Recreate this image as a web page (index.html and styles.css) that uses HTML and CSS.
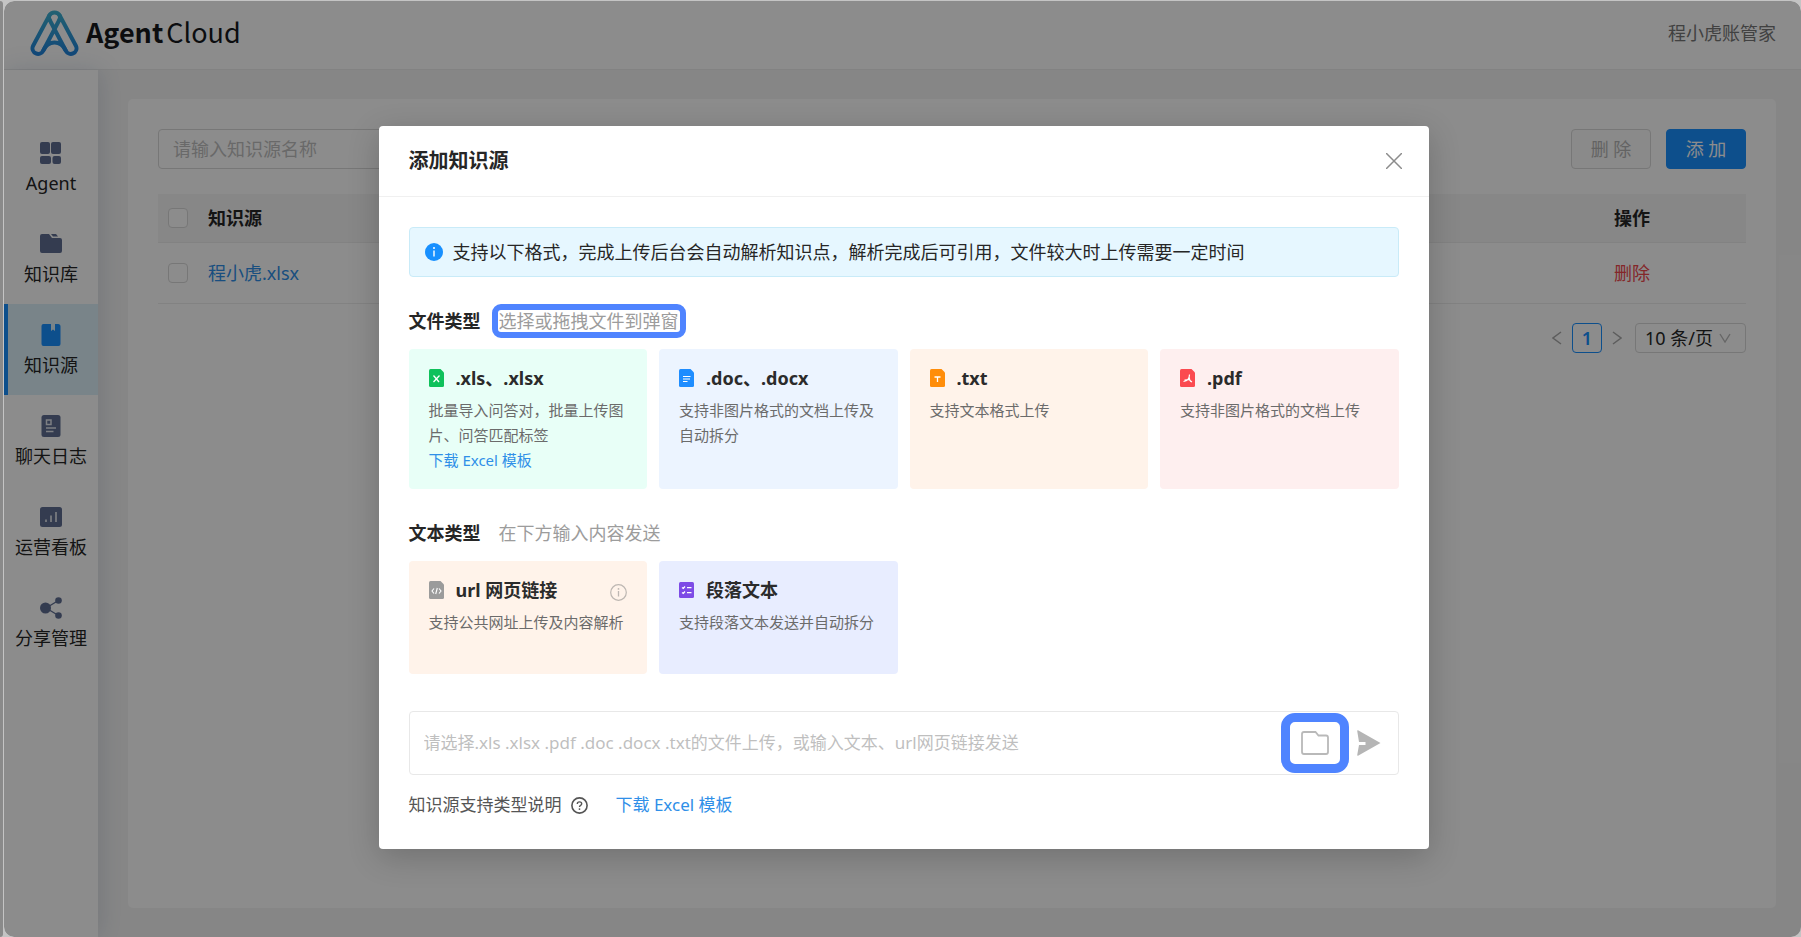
FILE: index.html
```html
<!DOCTYPE html>
<html lang="zh-CN">
<head>
<meta charset="utf-8">
<meta name="viewport" content="width=device-width, initial-scale=1">
<title>AgentCloud</title>
<link rel="stylesheet" href="styles.css">
</head>
<body>
<div class="edge"></div>
<div class="app">
  <header class="topbar">
    <a class="brand" href="#">
      <svg class="brand-mark" viewBox="0 0 49 46" fill="none" stroke="url(#logo)" stroke-width="4" stroke-linecap="round" stroke-linejoin="round">
        <defs><linearGradient id="logo" x1="0" y1="0" x2="0" y2="46" gradientUnits="userSpaceOnUse"><stop offset="0" stop-color="#3fb2cf"/><stop offset="1" stop-color="#1f82dc"/></linearGradient></defs>
        <path d="M29.300 10 13.300 40.500A5.600 5.600 0 0 1 3 36L19.300 5.500A5.900 5.900 0 0 1 29.700 5.500L46 36A5.600 5.600 0 0 1 35.700 40.500L19.700 10"/>
        <path d="M19.300 5.500Q18.500 8 19.700 10M29.700 5.500Q30.500 8 29.300 10M13.300 40.500Q17 32.500 24.500 32.500T35.700 40.500"/>
      </svg>
      <span class="brand-name"><b>Agent</b><span>Cloud</span></span>
    </a>
    <span class="account">程小虎账管家</span>
  </header>
  <div class="shell">
    <nav class="sidebar">
      <a class="nav-item" href="#">
        <svg class="nav-icon" viewBox="0 0 22 22"><rect x="0" y="0" width="10" height="12" rx="2"/><rect x="11" y="0" width="10" height="12" rx="2"/><rect x="0" y="14" width="11" height="8" rx="2"/><rect x="12.500" y="14" width="8.500" height="8" rx="2"/></svg>
        <span>Agent</span></a>
      <a class="nav-item" href="#">
        <svg class="nav-icon" viewBox="0 0 22 22"><path d="M2 1H9L12 5H20Q22 5 22 7V18Q22 20 20 20H2Q0 20 0 18V3Q0 1 2 1Z"/><path d="M11 1H16L18 3.500H13Z"/></svg>
        <span>知识库</span></a>
      <a class="nav-item active" href="#">
        <svg class="nav-icon" viewBox="0 0 22 22"><path d="M3.500 0H11V7L13 5.500 15 7V0H18Q20.500 0 20.500 2.500V20Q20.500 22 18.500 22H3.500Q1.500 22 1.500 20V2Q1.500 0 3.500 0Z"/></svg>
        <span>知识源</span></a>
      <a class="nav-item" href="#">
        <svg class="nav-icon" viewBox="0 0 22 22"><rect x="1.500" y="0" width="19" height="22" rx="2.500"/><g fill="none" stroke="#e4e7ee" stroke-width="1.500"><rect x="6.500" y="5" width="4.500" height="4.500"/><path d="M6 13H16M6 16.500H13.500"/></g></svg>
        <span>聊天日志</span></a>
      <a class="nav-item" href="#">
        <svg class="nav-icon" viewBox="0 0 22 22"><rect x="0" y="1" width="22" height="20" rx="2.500"/><path d="M6 13.500V16M11 9.500V16M16 6V16" fill="none" stroke="#ccd1dc" stroke-width="2"/></svg>
        <span>运营看板</span></a>
      <a class="nav-item" href="#">
        <svg class="nav-icon" viewBox="0 0 22 22"><circle cx="5.500" cy="11" r="5.500"/><circle cx="18.500" cy="3.500" r="3.300"/><circle cx="18.500" cy="18.500" r="3.300"/><path d="M18.500 3.500 6 11 18.500 18.500" fill="none" stroke="#5f6e93" stroke-width="1.300"/></svg>
        <span>分享管理</span></a>
    </nav>
    <main class="content">
      <section class="panel">
        <div class="toolbar">
          <input class="search" type="text" placeholder="请输入知识源名称" aria-label="知识源名称">
          <div class="actions">
            <button class="btn" type="button" disabled>删 除</button>
            <button class="btn primary" type="button">添 加</button>
          </div>
        </div>
        <table class="sources">
          <thead><tr><th class="pick"><input type="checkbox" aria-label="全选"></th><th>知识源</th><th class="ops">操作</th></tr></thead>
          <tbody><tr><td class="pick"><input type="checkbox" aria-label="选择 程小虎.xlsx"></td><td><a class="link" href="#">程小虎.xlsx</a></td><td class="ops"><a class="danger" href="#">删除</a></td></tr></tbody>
        </table>
        <div class="pager">
          <button class="page-arrow" type="button" aria-label="上一页"><svg viewBox="0 0 10 14"><path d="M9 1 1 7 9 13"/></svg></button>
          <button class="page-num" type="button">1</button>
          <button class="page-arrow" type="button" aria-label="下一页"><svg viewBox="0 0 10 14"><path d="M1 1 9 7 1 13"/></svg></button>
          <div class="page-size">
            <select aria-label="每页条数"><option>10 条/页</option></select>
            <svg viewBox="0 0 12 10"><path d="M1 1 6 9 11 1"/></svg>
          </div>
        </div>
      </section>
    </main>
  </div>
  <div class="mask">
    <div class="modal" role="dialog" aria-modal="true" aria-labelledby="dialog-title">
      <header class="modal-head">
        <h2 id="dialog-title">添加知识源</h2>
        <button class="close" type="button" aria-label="关闭"><svg viewBox="0 0 16 16"><path d="M0 0 16 16M16 0 0 16"/></svg></button>
      </header>
      <div class="modal-body">
        <div class="alert">
          <svg viewBox="0 0 18 18"><circle cx="9" cy="9" r="9" fill="#1890ff"/><circle cx="9" cy="5" r="1" fill="#fff"/><path d="M9 7.500V13.500" stroke="#fff" stroke-width="1.400"/></svg>
          <p>支持以下格式，完成上传后台会自动解析知识点，解析完成后可引用，文件较大时上传需要一定时间</p>
        </div>

        <div class="section-head"><h3>文件类型</h3><span class="hint marked">选择或拖拽文件到弹窗</span></div>
        <div class="cards">
          <article class="card green">
            <h4><svg viewBox="0 0 16 18"><path fill="#0fc15b" d="M1.500 0H11.500L15 3.500V16.500Q15 18 13.500 18H1.500Q0 18 0 16.500V1.500Q0 0 1.500 0Z"/><path d="M4.500 6.500 10 13M10.500 6.500 4.500 13" stroke="#fff" stroke-width="1.300"/></svg>.xls、.xlsx</h4>
            <p>批量导入问答对，批量上传图片、问答匹配标签</p>
            <a class="link" href="#">下载 Excel 模板</a>
          </article>
          <article class="card blue">
            <h4><svg viewBox="0 0 16 18"><path fill="#1e8dff" d="M1.500 0H11.500L15 3.500V16.500Q15 18 13.500 18H1.500Q0 18 0 16.500V1.500Q0 0 1.500 0Z"/><path d="M4 7.500H11.500M4 10H11M4 12.500H8.500" stroke="#fff" stroke-width="1.200"/></svg>.doc、.docx</h4>
            <p>支持非图片格式的文档上传及自动拆分</p>
          </article>
          <article class="card orange">
            <h4><svg viewBox="0 0 16 18"><path fill="#ff8d0a" d="M1.500 0H11.500L15 3.500V16.500Q15 18 13.500 18H1.500Q0 18 0 16.500V1.500Q0 0 1.500 0Z"/><path d="M4.500 8H10.500M7.500 8V13" stroke="#fff" stroke-width="1.300"/></svg>.txt</h4>
            <p>支持文本格式上传</p>
          </article>
          <article class="card red">
            <h4><svg viewBox="0 0 16 18"><path fill="#fb4a50" d="M1.500 0H11.500L15 3.500V16.500Q15 18 13.500 18H1.500Q0 18 0 16.500V1.500Q0 0 1.500 0Z"/><path d="M9.500 5.500C9.500 9 7.500 12 3.500 12.500M9.200 8.500C9 11 10 12 12 13M4.500 11 9.500 10.500" fill="none" stroke="#fff" stroke-width="1.200"/></svg>.pdf</h4>
            <p>支持非图片格式的文档上传</p>
          </article>
        </div>

        <div class="section-head"><h3>文本类型</h3><span class="hint">在下方输入内容发送</span></div>
        <div class="cards short">
          <article class="card orange">
            <h4><svg viewBox="0 0 16 18"><path fill="#9b9b9b" d="M1.500 0H11.500L15 3.500V16.500Q15 18 13.500 18H1.500Q0 18 0 16.500V1.500Q0 0 1.500 0Z"/><path d="M5 7.500 3 10 5 12.500M10 7.500 12 10 10 12.500M8.300 7 6.700 13" fill="none" stroke="#fff" stroke-width="1.100"/></svg>url 网页链接
              <svg class="info" viewBox="0 0 17 17"><circle cx="8.500" cy="8.500" r="7.800" fill="none" stroke="#bdb7b2" stroke-width="1.200"/><circle cx="8.500" cy="4.900" r=".9" fill="#bdb7b2"/><path d="M8.500 7V12.500" stroke="#bdb7b2" stroke-width="1.300"/></svg></h4>
            <p>支持公共网址上传及内容解析</p>
          </article>
          <article class="card violet">
            <h4><svg viewBox="0 0 16 18"><rect x="0" y="1" width="15" height="16" rx="1.500" fill="#7d4be6"/><path d="M3 6.500 4.300 7.500 6 5.500M3 11.500 4.300 12.500 6 10.500M8 6.700H12.500M8 11.700H12.500" fill="none" stroke="#fff" stroke-width="1.200"/></svg>段落文本</h4>
            <p>支持段落文本发送并自动拆分</p>
          </article>
        </div>

        <div class="composer">
          <input type="text" placeholder="请选择.xls .xlsx .pdf .doc .docx .txt的文件上传，或输入文本、url网页链接发送" aria-label="内容">
          <button class="folder" type="button" aria-label="选择文件"><svg viewBox="0 0 28 24"><path d="M3 1H14.500L17.500 4.500H25Q27 4.500 27 6.500V21Q27 23 25 23H3Q1 23 1 21V3Q1 1 3 1Z" fill="none" stroke="#b9b9b9" stroke-width="1.800"/></svg></button>
          <button class="send" type="button" aria-label="发送"><svg viewBox="0 0 24 26"><path d="M1 .3 23.500 13 1 25.700Q0 26 .3 24.500L2 15H8.500V12H2L.3 1.500Q0 0 1 .3Z" fill="#b5b5b5"/></svg></button>
        </div>
        <div class="foot">
          <span>知识源支持类型说明</span>
          <svg viewBox="0 0 17 17"><circle cx="8.500" cy="8.500" r="7.600" fill="none" stroke="#555" stroke-width="1.600"/><path d="M6.300 7Q6.300 4.900 8.500 4.900T10.700 6.800Q10.700 7.700 9.600 8.300 8.500 8.900 8.500 10" fill="none" stroke="#555" stroke-width="1.400"/><circle cx="8.500" cy="12.100" r=".9" fill="#555"/></svg>
          <a class="link" href="#">下载 Excel 模板</a>
        </div>
      </div>
    </div>
  </div>
</div>
</body>
</html>
```
FILE: styles.css
```css
* { box-sizing: border-box; }
body {
  margin: 0;
  min-height: 100vh;
  display: flex;
  gap: 1px;
  padding-top: 1px;
  background: #c4c4c4;
  color: #262626;
  font: 18px/26px "Noto Sans", "Noto Sans CJK SC", sans-serif;
}
h2, h3, h4, p { margin: 0; }
a { text-decoration: none; color: inherit; }
button, input, select { font: inherit; color: inherit; }
button { padding: 0; border: 0; background: none; }
svg { display: block; flex: none; }
.link { color: #2f8fe8; }
.danger { color: #f0474c; }

.edge { width: 3px; background: #8a8a8a; border-radius: 0 4px 4px 0; }
.app {
  position: relative;
  flex: 1;
  min-width: 0;
  display: flex;
  flex-direction: column;
  background: #f5f5f5;
  border-radius: 10px;
  overflow: hidden;
}

.topbar {
  display: flex;
  align-items: center;
  justify-content: space-between;
  height: 69px;
  padding: 0 25px 4px 26px;
  background: #fff;
  border-bottom: 1px solid #ededed;
}
.brand { display: flex; align-items: center; gap: 7px; }
.brand-mark { width: 49px; height: 46px; }
.brand-name {
  display: flex;
  gap: 3px;
  padding-bottom: 2px;
  color: #16191d;
  font: 27px/40px "Noto Sans CJK SC", sans-serif;
}
.account { color: #777; }

.shell { flex: 1; display: flex; }
.sidebar {
  width: 94px;
  padding-top: 52px;
  background: #fff;
  box-shadow: 2px 0 24px rgba(40, 70, 120, .16);
}
.nav-item {
  display: flex;
  flex-direction: column;
  align-items: center;
  gap: 6px;
  padding: 20px 0 17px;
  white-space: nowrap;
}
.nav-icon { width: 22px; height: 22px; fill: #5f6e93; }
.nav-item.active { background: #dcf1fa; box-shadow: inset 4px 0 #1890ff; }
.nav-item.active .nav-icon { fill: #1890ff; }

.content { flex: 1; display: flex; padding: 29px 25px 29px 30px; }
.panel { flex: 1; padding: 30px; background: #fff; border-radius: 5px; }
.toolbar { display: flex; justify-content: space-between; }
.search {
  width: 300px;
  height: 40px;
  padding: 0 14px;
  border: 1px solid #d9d9d9;
  border-radius: 4px;
  background: #fff;
}
::placeholder { color: #bfbfbf; opacity: 1; }
.actions { display: flex; gap: 15px; }
.btn {
  width: 80px;
  height: 40px;
  border: 1px solid #d9d9d9;
  border-radius: 4px;
}
.btn:disabled { color: #b5b5b5; background: #fbfbfb; }
.btn.primary { border-color: #1890ff; background: #1890ff; color: #fff; }

.sources { width: 100%; margin-top: 25px; border-collapse: collapse; text-align: left; }
.sources th { height: 48px; padding: 0; background: #f6f6f6; border-bottom: 1px solid #ededed; }
.sources td { height: 61px; padding: 0; border-bottom: 1px solid #ededed; }
.sources .pick { width: 50px; padding-left: 10px; }
.sources .ops { width: 132px; }
.sources input {
  appearance: none;
  display: block;
  width: 20px;
  height: 20px;
  margin: 0;
  border: 1px solid #d9d9d9;
  border-radius: 4px;
  background: #fff;
}

.pager { display: flex; justify-content: flex-end; align-items: center; margin-top: 19px; }
.page-arrow { width: 30px; height: 30px; display: grid; place-items: center; }
.page-arrow svg { width: 10px; height: 14px; fill: none; stroke: #aaa; stroke-width: 1.500; }
.page-num { width: 30px; height: 30px; border: 1px solid #1890ff; border-radius: 4px; color: #1890ff; font-weight: 600; }
.page-size {
  display: grid;
  width: 111px;
  height: 30px;
  margin-left: 3px;
  border: 1px solid #d9d9d9;
  border-radius: 4px;
  align-items: center;
}
.page-size select { grid-area: 1 / 1; appearance: none; border: 0; background: none; padding: 0 0 0 9px; height: 28px; }
.page-size svg { grid-area: 1 / 1; justify-self: end; margin-right: 14px; width: 12px; height: 10px; fill: none; stroke: #bbb; stroke-width: 1.400; pointer-events: none; }

.mask {
  position: absolute;
  inset: 0;
  display: flex;
  justify-content: center;
  align-items: flex-start;
  padding: 125px 0 40px 2px;
  background: rgba(0, 0, 0, .45);
}
.modal {
  width: 1050px;
  max-width: 90%;
  background: #fff;
  border-radius: 4px;
  box-shadow: 0 8px 32px rgba(0, 0, 0, .2);
}
.modal-head {
  display: flex;
  align-items: center;
  justify-content: space-between;
  height: 71px;
  padding: 0 27px 0 30px;
  border-bottom: 1px solid #f0f0f0;
}
.modal-head h2 { font-size: 20px; line-height: 28px; font-weight: 600; }
.close svg { width: 16px; height: 16px; fill: none; stroke: #8c8c8c; stroke-width: 1.500; }
.modal-body { padding: 30px 30px 31px; }

.alert {
  display: flex;
  align-items: center;
  gap: 10px;
  padding: 11px 15px;
  border: 1px solid #c9ebf8;
  border-radius: 4px;
  background: #e6f7ff;
}
.alert svg { width: 18px; height: 18px; }

.section-head { display: flex; align-items: center; gap: 18px; margin: 31px 0 15px; }
.section-head h3 { font-size: 18px; font-weight: 700; }
.hint { position: relative; color: #9c9c9c; }
.marked::after {
  content: "";
  position: absolute;
  inset: -4px -7px;
  border: 6px solid #4f84ff;
  border-radius: 9px;
}
.cards { display: grid; grid-template-columns: repeat(4, 1fr); gap: 12px; }
.card { min-height: 139px; padding: 16px 20px; border-radius: 4px; font-size: 15px; line-height: 25px; color: #6b6b6b; }
.short .card { min-height: 113px; }
.card h4 { display: flex; align-items: center; gap: 11px; margin-bottom: 7px; font-size: 18px; line-height: 26px; color: #2b2b2b; }
.card h4 svg { width: 16px; height: 18px; }
.card h4 .info { width: 17px; height: 17px; margin: 5px 0 0 auto; }
.card .link { display: block; }
.green { background: #e8fff7; }
.blue { background: #ecf4ff; }
.orange { background: #fff3ea; }
.red { background: #feefef; }
.violet { background: #e8edff; }

.composer {
  display: flex;
  align-items: center;
  height: 64px;
  margin-top: 37px;
  padding: 0 17px 0 14px;
  border: 1px solid #e8e8e8;
  border-radius: 4px;
  font-size: 17px;
}
.composer input { flex: 1; min-width: 0; padding: 0; border: 0; background: none; outline: 0; }
.folder { position: relative; }
.folder::after {
  content: "";
  position: absolute;
  inset: -18px -20px;
  border: 9px solid #4f84ff;
  border-radius: 14px;
}
.folder svg { width: 28px; height: 24px; }
.send { margin-left: 28px; }
.send svg { width: 24px; height: 26px; }

.foot { display: flex; align-items: center; margin-top: 17px; color: #555; font-size: 17px; }
.foot svg { width: 17px; height: 17px; margin: 0 28px 0 9px; }
```
